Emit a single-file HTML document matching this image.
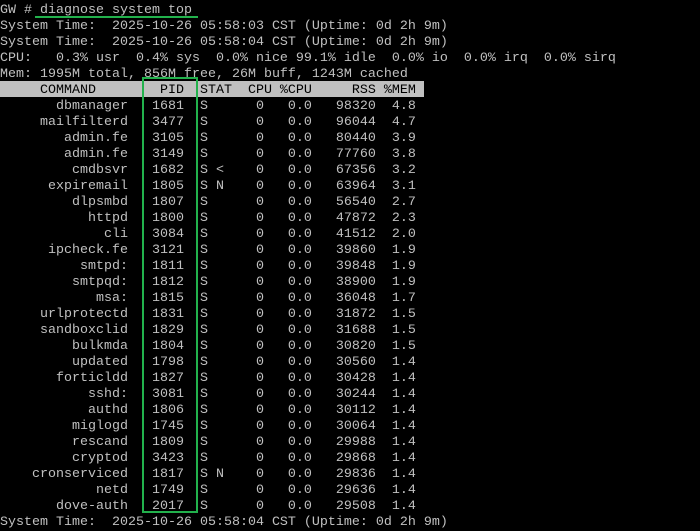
<!DOCTYPE html>
<html><head><meta charset="utf-8"><style>
html,body{margin:0;padding:0;background:#000;width:700px;height:518px;overflow:hidden}
pre{margin:0;position:absolute;left:0;top:3px;font-family:"Liberation Mono",monospace;font-size:13.33px;line-height:16px;color:#c0c0c0;white-space:pre}
.hdbg{position:absolute;left:0;top:81px;width:424px;height:16px;background:#c0c0c0}
.hd{color:#000}
.ul{position:absolute;left:35px;top:16px;width:163px;height:2px;background:#22b14c}
.box{position:absolute;left:142px;top:77px;width:52px;height:432px;border:2.5px solid #22b14c}
</style></head><body>
<div class="hdbg"></div>
<pre>GW # diagnose system top
System Time:  2025-10-26 05:58:03 CST (Uptime: 0d 2h 9m)
System Time:  2025-10-26 05:58:04 CST (Uptime: 0d 2h 9m)
CPU:   0.3% usr  0.4% sys  0.0% nice 99.1% idle  0.0% io  0.0% irq  0.0% sirq
Mem: 1995M total, 856M free, 26M buff, 1243M cached
<span class="hd">     COMMAND        PID  STAT  CPU %CPU     RSS %MEM </span>
       dbmanager   1681  S      0   0.0   98320  4.8
     mailfilterd   3477  S      0   0.0   96044  4.7
        admin.fe   3105  S      0   0.0   80440  3.9
        admin.fe   3149  S      0   0.0   77760  3.8
         cmdbsvr   1682  S <    0   0.0   67356  3.2
      expiremail   1805  S N    0   0.0   63964  3.1
         dlpsmbd   1807  S      0   0.0   56540  2.7
           httpd   1800  S      0   0.0   47872  2.3
             cli   3084  S      0   0.0   41512  2.0
      ipcheck.fe   3121  S      0   0.0   39860  1.9
          smtpd:   1811  S      0   0.0   39848  1.9
         smtpqd:   1812  S      0   0.0   38900  1.9
            msa:   1815  S      0   0.0   36048  1.7
     urlprotectd   1831  S      0   0.0   31872  1.5
     sandboxclid   1829  S      0   0.0   31688  1.5
         bulkmda   1804  S      0   0.0   30820  1.5
         updated   1798  S      0   0.0   30560  1.4
       forticldd   1827  S      0   0.0   30428  1.4
           sshd:   3081  S      0   0.0   30244  1.4
           authd   1806  S      0   0.0   30112  1.4
         miglogd   1745  S      0   0.0   30064  1.4
         rescand   1809  S      0   0.0   29988  1.4
         cryptod   3423  S      0   0.0   29868  1.4
    cronserviced   1817  S N    0   0.0   29836  1.4
            netd   1749  S      0   0.0   29636  1.4
       dove-auth   2017  S      0   0.0   29508  1.4
System Time:  2025-10-26 05:58:04 CST (Uptime: 0d 2h 9m)</pre>
<div class="ul"></div>
<div class="box"></div>
</body></html>
